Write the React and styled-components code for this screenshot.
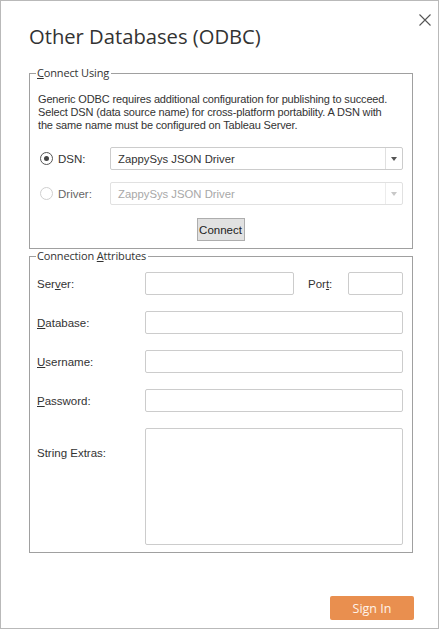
import styled, { createGlobalStyle } from "styled-components";

const GlobalStyle = createGlobalStyle`
    html, body {
        margin: 0;
        padding: 0;
        background: #ffffff;
    }

    * {
        box-sizing: border-box;
    }
`;

const Dialog = styled.div`
    position: relative;
    display: flex;
    flex-direction: column;
    width: 439px;
    height: 629px;
    padding: 20px 25px 8px 28px;

    background: #ffffff;
    border: 1px solid #b9b9b9;

    color: #333333;
    font-family: "Liberation Sans", Arial, sans-serif;
    font-size: 11px;
`;

const CloseButton = styled.button`
    position: absolute;
    top: 12px;
    right: 6px;
    width: 14px;
    height: 14px;
    padding: 0;

    background: none;
    border: none;
    cursor: pointer;
`;

const Title = styled.h1`
    margin: 2px 0 17px;

    color: #333333;
    font-family: "Open Sans", sans-serif;
    font-size: 20.2px;
    font-weight: 400;
    line-height: 26px;
`;

const GroupBox = styled.fieldset`
    margin: 0;
    padding: ${(p) => p.$padding};
    min-width: 0;

    border: 1px solid #a0a0a0;
`;

const Legend = styled.legend`
    margin-left: ${(p) => p.$offset}px;
    padding: 0 2px 0 1px;

    color: #333333;
    font-family: "Open Sans", sans-serif;
    font-size: 11px;
    letter-spacing: -0.15px;
    line-height: 14px;
`;

const Description = styled.p`
    margin: 0 0 15px;
    letter-spacing: -0.15px;
    line-height: 13px;
`;

const ChoiceRow = styled.div`
    display: grid;
    grid-template-columns: 72px 1fr;
    align-items: center;
    margin-bottom: ${(p) => p.$gap}px;
`;

const RadioLabel = styled.label`
    display: flex;
    align-items: center;
    gap: 5px;
    padding-left: 2px;

    color: ${(p) => (p.$disabled ? "#666666" : "#333333")};
    font-size: 11.5px;
`;

const RadioDot = styled.span`
    position: relative;
    width: 13px;
    height: 13px;

    border: 1px solid ${(p) => (p.$disabled ? "#cfcfcf" : "#555555")};
    border-radius: 50%;

    &::after {
        content: "";
        display: ${(p) => (p.$checked ? "block" : "none")};
        position: absolute;
        top: 3px;
        left: 3px;
        width: 5px;
        height: 5px;

        background: #444444;
        border-radius: 50%;
    }
`;

const Select = styled.div`
    display: flex;
    height: 23px;

    border: 1px solid ${(p) => (p.$disabled ? "#e1e1e1" : "#cccccc")};
    border-radius: 2px;

    color: ${(p) => (p.$disabled ? "#a8a8a8" : "#333333")};
    font-size: 11.3px;
`;

const SelectValue = styled.span`
    display: flex;
    align-items: center;
    flex: 1;
    padding-left: 7px;
`;

const SelectArrow = styled.span`
    display: flex;
    align-items: center;
    justify-content: center;
    width: 17px;

    border-left: 1px solid ${(p) => (p.$disabled ? "#ececec" : "#e0e0e0")};

    &::after {
        content: "";
        border-left: 3.5px solid transparent;
        border-right: 3.5px solid transparent;
        border-top: 4px solid ${(p) => (p.$disabled ? "#c8c8c8" : "#555555")};
    }
`;

const ButtonRow = styled.div`
    display: flex;
    justify-content: center;
`;

const ConnectButton = styled.button`
    width: 48px;
    height: 23px;
    padding: 0;

    background: #e1e1e1;
    border: 1px solid #adadad;

    color: #222222;
    font-family: "Liberation Sans", Arial, sans-serif;
    font-size: 11.5px;
`;

const FieldGrid = styled.div`
    display: grid;
    grid-template-columns: 108px 1fr;
    row-gap: 16px;
    align-items: center;
`;

const FieldLabel = styled.label`
    align-self: ${(p) => (p.$top ? "start" : "center")};
    padding-top: ${(p) => (p.$top ? "19px" : "0")};

    color: #333333;
    font-size: 11.5px;
`;

const ServerRow = styled.div`
    display: grid;
    grid-template-columns: 149px 1fr 55px;
    align-items: center;
`;

const PortLabel = styled.label`
    padding-left: 14px;
    font-size: 11.5px;
`;

const TextInput = styled.input`
    width: 100%;
    height: 23px;
    padding: 0 6px;

    background: #ffffff;
    border: 1px solid #cccccc;
    border-radius: 2px;
    outline: none;
`;

const TextArea = styled.textarea`
    display: block;
    width: 100%;
    height: 117px;
    padding: 4px 6px;

    background: #ffffff;
    border: 1px solid #cccccc;
    border-radius: 2px;
    outline: none;
    resize: none;
`;

const Footer = styled.div`
    display: flex;
    justify-content: flex-end;
    margin: auto -1px 0 0;
`;

const SignInButton = styled.button`
    width: 84px;
    height: 24px;

    background: #e98f4f;
    border: none;
    border-radius: 2px;

    color: #fff3ea;
    font-family: "Open Sans", sans-serif;
    font-size: 12.5px;
`;

function Radio({ label, checked, disabled }) {
    return (
        <RadioLabel $disabled={disabled}>
            <RadioDot $checked={checked} $disabled={disabled} />
            {label}
        </RadioLabel>
    );
}

function Dropdown({ value, disabled }) {
    return (
        <Select $disabled={disabled}>
            <SelectValue>{value}</SelectValue>
            <SelectArrow $disabled={disabled} />
        </Select>
    );
}

export default function App() {
    return (
        <>
            <GlobalStyle />
            <Dialog>
                <CloseButton aria-label="Close">
                    <svg width="14" height="14" viewBox="0 0 14 14">
                        <path
                            d="M1.5 1.5 L12.5 12.5 M12.5 1.5 L1.5 12.5"
                            stroke="#555555"
                            strokeWidth="1.1"
                        />
                    </svg>
                </CloseButton>

                <Title>Other Databases (ODBC)</Title>

                <GroupBox $padding="13px 9px 7px 8px">
                    <Legend $offset={-2}>
                        <u>C</u>onnect Using
                    </Legend>
                    <Description>
                        Generic ODBC requires additional configuration for publishing to succeed.
                        <br />
                        Select DSN (data source name) for cross-platform portability. A DSN with
                        <br />
                        the same name must be configured on Tableau Server.
                    </Description>

                    <ChoiceRow $gap={12}>
                        <Radio label="DSN:" checked />
                        <Dropdown value="ZappySys JSON Driver" />
                    </ChoiceRow>
                    <ChoiceRow $gap={13}>
                        <Radio label="Driver:" disabled />
                        <Dropdown value="ZappySys JSON Driver" disabled />
                    </ChoiceRow>

                    <ButtonRow>
                        <ConnectButton>Connect</ConnectButton>
                    </ButtonRow>
                </GroupBox>

                <GroupBox $padding="9px 9px 7px 7px">
                    <Legend $offset={-1}>
                        Connection <u>A</u>ttributes
                    </Legend>
                    <FieldGrid>
                        <FieldLabel>
                            Ser<u>v</u>er:
                        </FieldLabel>
                        <ServerRow>
                            <TextInput />
                            <PortLabel>
                                Por<u>t</u>:
                            </PortLabel>
                            <TextInput />
                        </ServerRow>

                        <FieldLabel>
                            <u>D</u>atabase:
                        </FieldLabel>
                        <TextInput />

                        <FieldLabel>
                            <u>U</u>sername:
                        </FieldLabel>
                        <TextInput />

                        <FieldLabel>
                            <u>P</u>assword:
                        </FieldLabel>
                        <TextInput />

                        <FieldLabel $top>String Extras:</FieldLabel>
                        <TextArea />
                    </FieldGrid>
                </GroupBox>

                <Footer>
                    <SignInButton>Sign In</SignInButton>
                </Footer>
            </Dialog>
        </>
    );
}
